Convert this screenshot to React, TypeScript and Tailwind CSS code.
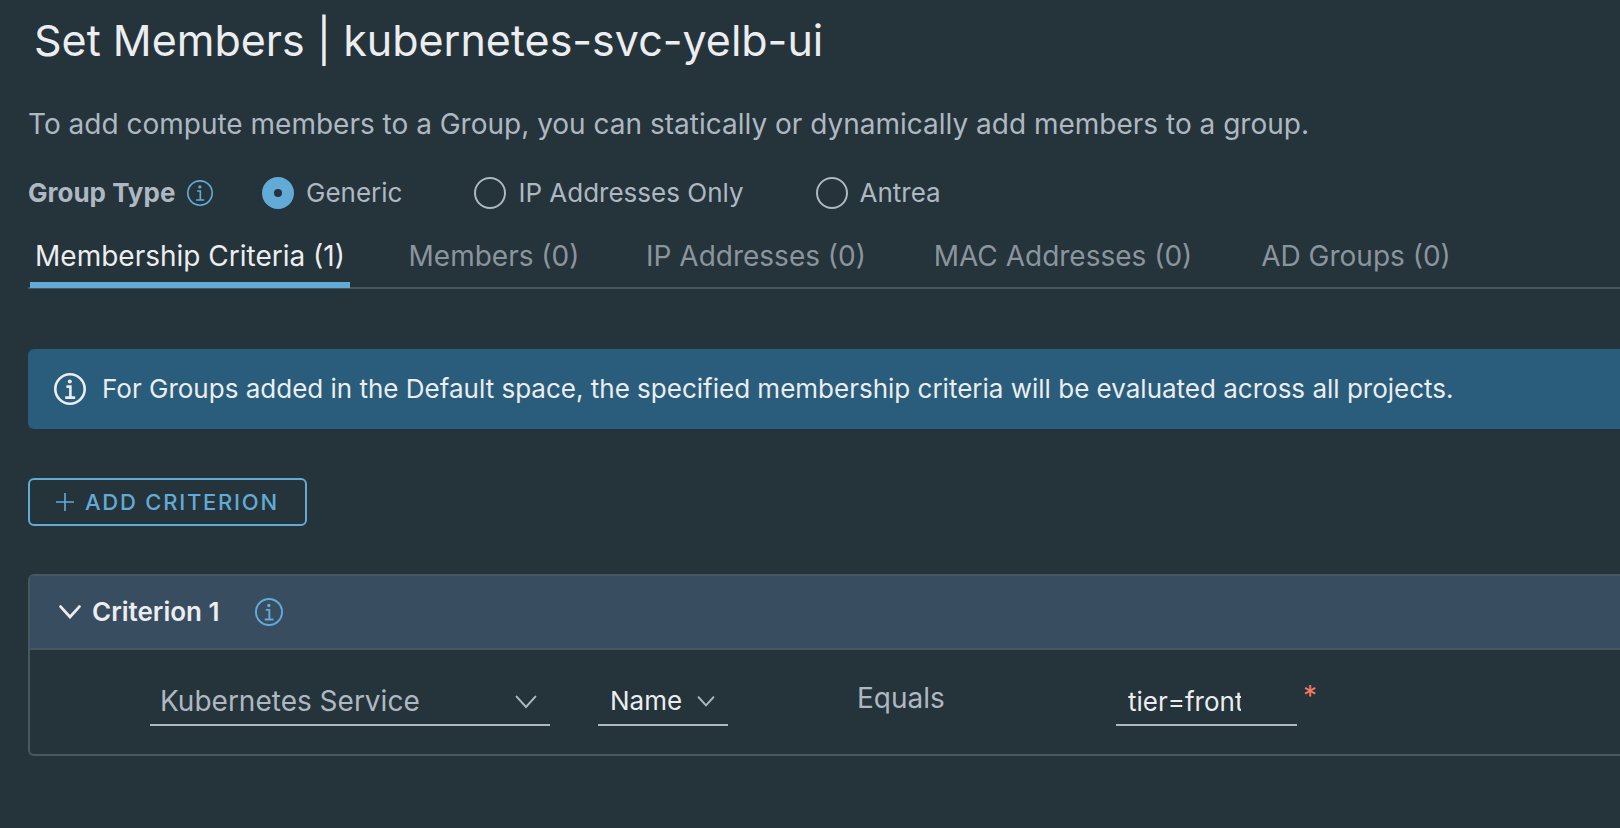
import { useState } from "react";

const groupTypes = ["Generic", "IP Addresses Only", "Antrea"];

const tabs = [
  { label: "Membership Criteria (1)", width: "w-[320px]" },
  { label: "Members (0)", width: "w-[184px]" },
  { label: "IP Addresses (0)", width: "w-[236px]" },
  { label: "MAC Addresses (0)", width: "w-[274px]" },
  { label: "AD Groups (0)", width: "w-[208px]" },
];

function InfoIcon({ className, stroke }: { className: string; stroke: number }) {
  return (
    <svg viewBox="0 0 32 32" className={className} fill="none" stroke="currentColor" strokeWidth={stroke} aria-hidden="true">
      <circle cx="16" cy="16" r={16 - stroke / 2} />
      <circle cx="15.8" cy="8.6" r="2" fill="currentColor" stroke="none" />
      <path d="M12.4 13.6H16.4V24.6M11.2 24.6H21.2" />
    </svg>
  );
}

function Chevron({ className, stroke }: { className: string; stroke: number }) {
  return (
    <svg viewBox="0 0 22 14" className={className} fill="none" stroke="currentColor" strokeWidth={stroke} strokeLinecap="round" aria-hidden="true">
      <path d="M1.6 1.6L11 12L20.4 1.6" />
    </svg>
  );
}

export default function App() {
  const [groupType, setGroupType] = useState("Generic");
  const [activeTab, setActiveTab] = useState(0);
  const [open, setOpen] = useState(true);

  return (
    <main className="min-h-screen overflow-x-hidden bg-[#25333a] pl-7 font-['Inter','Liberation_Sans',sans-serif] text-[26px] leading-9 text-[#aeb8c2]">
      <h1 className="pt-3 pl-1.5 text-[43px] leading-14 font-normal text-[#ebedf0]">Set Members | kubernetes-svc-yelb-ui</h1>

      <p className="mt-[38px] text-[28px]">To add compute members to a Group, you can statically or dynamically add members to a group.</p>

      <div role="radiogroup" aria-labelledby="group-type-label" className="mt-[33px] flex items-center">
        <div className="flex w-[234px] items-center gap-3">
          <span id="group-type-label" className="font-bold">Group Type</span>
          <button type="button" aria-label="About group types" className="text-[#62abd6]">
            <InfoIcon className="size-[26px]" stroke={2} />
          </button>
        </div>
        <div className="flex gap-[72px]">
          {groupTypes.map((type) => (
            <label key={type} className="flex items-center gap-3">
              <input
                type="radio"
                name="group-type"
                checked={groupType === type}
                onChange={() => setGroupType(type)}
                className="size-8 appearance-none rounded-full border-2 border-[#aeb8c2] checked:border-12 checked:border-[#62abd6]"
              />
              {type}
            </label>
          ))}
        </div>
      </div>

      <div role="tablist" className="mt-[27px] flex gap-[52px] border-b-2 border-[#495763] pl-0.5 text-[28px]">
        {tabs.map((tab, i) => (
          <button
            key={tab.label}
            type="button"
            role="tab"
            aria-selected={activeTab === i}
            onClick={() => setActiveTab(i)}
            className={`${tab.width} -mb-px shrink-0 border-b-6 pb-2 text-center whitespace-nowrap ${
              activeTab === i ? "border-[#62abd6] text-[#ebedf0]" : "border-transparent text-[#8a959e]"
            }`}
          >
            {tab.label}
          </button>
        ))}
      </div>

      <div role="status" className="mt-15 flex h-20 items-center gap-4 rounded-l-md bg-[#295d7b] pl-[26px] text-[#ebedf0]">
        <InfoIcon className="size-8 shrink-0" stroke={2.6} />
        <span>For Groups added in the Default space, the specified membership criteria will be evaluated across all projects.</span>
      </div>

      <button
        type="button"
        className="mt-[49px] flex h-12 items-center gap-[11px] rounded-md border-2 border-[#62abd6] px-[26px] text-[22px] font-medium tracking-[0.08em] text-[#62abd6]"
      >
        <svg viewBox="0 0 18 18" className="size-[18px]" fill="none" stroke="currentColor" strokeWidth="1.6" aria-hidden="true">
          <path d="M9 0V18M0 9H18" />
        </svg>
        ADD CRITERION
      </button>

      <section className="mt-12 rounded-l-md border-2 border-r-0 border-[#495763]">
        <div className="flex h-[74px] items-center gap-[35px] border-b-2 border-[#495763] bg-[#394d61] pl-[29px]">
          <button
            type="button"
            aria-expanded={open}
            onClick={() => setOpen(!open)}
            className="flex items-center gap-[11px] font-semibold text-[#ebedf0]"
          >
            <Chevron className={open ? "h-3.5 w-[22px]" : "h-3.5 w-[22px] -rotate-90"} stroke={2.8} />
            Criterion 1
          </button>
          <button type="button" aria-label="About criterion 1" className="text-[#62abd6]">
            <InfoIcon className="size-7" stroke={2.2} />
          </button>
        </div>
        {open && (
          <div className="flex items-start pt-7 pb-7 pl-30">
            <div className="relative w-[400px]">
              <select aria-label="Member type" className="h-12 w-full appearance-none border-b-2 border-[#aeb8c2] pl-2.5 text-[28px]">
                <option>Kubernetes Service</option>
              </select>
              <Chevron className="pointer-events-none absolute top-[17px] right-[13px] h-3.5 w-[22px]" stroke={2} />
            </div>
            <div className="relative ml-12 w-[130px]">
              <select aria-label="Property" className="h-12 w-full appearance-none border-b-2 border-[#aeb8c2] pl-3 text-[#ebedf0]">
                <option>Name</option>
              </select>
              <Chevron className="pointer-events-none absolute top-[18px] right-[13px] h-[11px] w-[18px]" stroke={2.4} />
            </div>
            <span className="ml-[129px] w-[259px] text-[28px] leading-10">Equals</span>
            <input
              aria-label="Value"
              required
              defaultValue="tier=front"
              className="h-12 w-[181px] border-b-2 border-[#aeb8c2] pr-14 pl-3 text-[#ebedf0]"
            />
            <span className="ml-1.5 text-[28px] text-[#f27a62]">*</span>
          </div>
        )}
      </section>
    </main>
  );
}
